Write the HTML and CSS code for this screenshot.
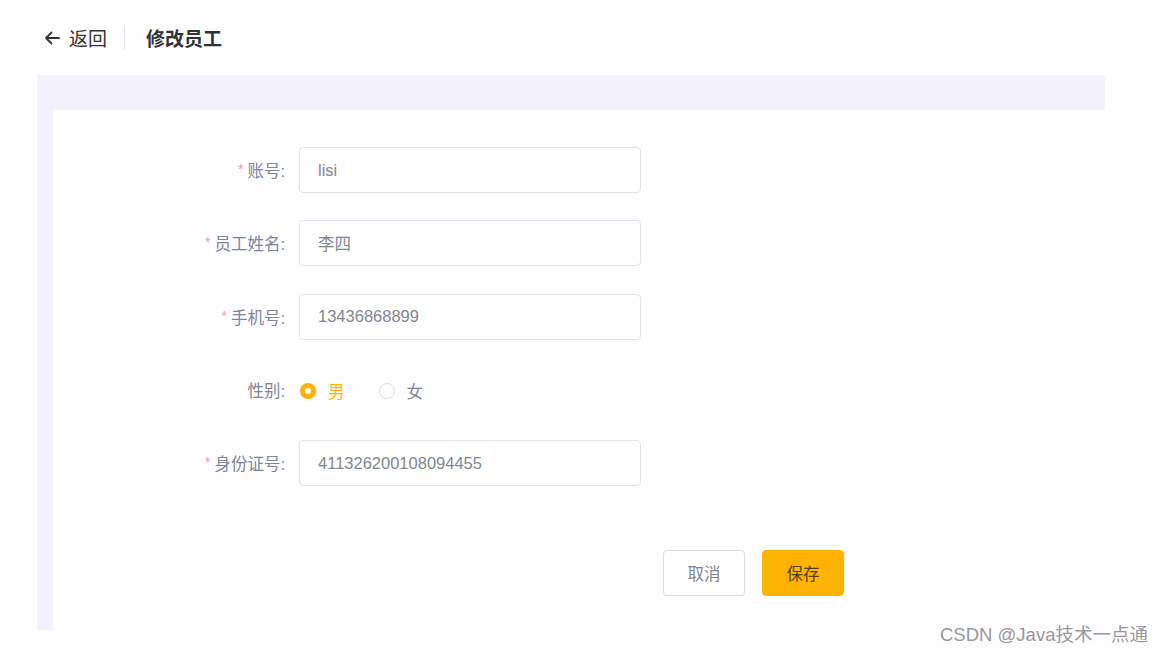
FILE: index.html
```html
<!doctype html>
<html>
<head>
<meta charset="utf-8">
<title>修改员工</title>
<link rel="stylesheet" href="styles.css">
</head>

<body>
<div class="page">
	<div class="header">
		<a class="back">
			<svg width="18" height="18" viewBox="0 0 18 18"><path d="M16 9H3M8.5 3.5L3 9l5.5 5.5" fill="none" stroke="#333" stroke-width="1.8" stroke-linecap="round" stroke-linejoin="round"/></svg>
			<span>返回</span>
		</a>
		<span class="divider"></span>
		<span class="title">修改员工</span>
	</div>
	<div class="main">
		<div class="card">
			<div class="form">
				<label class="label"><i>*</i>账号:</label>
				<div class="input">lisi</div>

				<label class="label"><i>*</i>员工姓名:</label>
				<div class="input">李四</div>

				<label class="label"><i>*</i>手机号:</label>
				<div class="input">13436868899</div>

				<label class="label">性别:</label>
				<div class="radios">
					<span class="radio checked"><b></b>男</span>
					<span class="radio"><b></b>女</span>
				</div>

				<label class="label"><i>*</i>身份证号:</label>
				<div class="input">411326200108094455</div>
			</div>
			<div class="btns">
				<a class="btn">取消</a>
				<a class="btn save">保存</a>
			</div>
		</div>
	</div>
	<div class="mark">CSDN @Java技术一点通</div>
</div>
</body>
</html>
```

FILE: styles.css
```css
	*{
		box-sizing:border-box;
		}
	body{
		margin:0;
		background:#fefdff;
		font-family:"Liberation Sans","Noto Sans CJK SC",sans-serif;
		color:#333;
		}
	.page{
		width:1165px;
		height:651px;
		position:relative;
		overflow:hidden;
		}
	.header{
		height:75px;
		display:flex;
		align-items:center;
		padding:0 0 0 43px;
		}
	.back{
		display:flex;
		align-items:center;
		gap:8px;
		font-size:19px;
		color:#333;
		}
	.divider{
		width:1px;
		height:25px;
		background:#e6e6ea;
		margin:0 21px 0 17px;
		}
	.title{
		font-size:19px;
		font-weight:bold;
		color:#333;
		}
	.main{
		width:1068px;
		height:555px;
		margin-left:37px;
		padding:35px 0 0 16px;
		background:#f3f2fa;
		}
	.card{
		height:520px;
		background:#fefdff;
		padding-top:37px;
		}
	.form{
		display:grid;
		grid-template-columns:234px 342px;
		grid-template-rows:46px 46px 46px 46px 46px;
		column-gap:12px;
		row-gap:27.3px;
		}
	.label{
		height:46px;
		display:flex;
		align-items:center;
		justify-content:flex-end;
		padding-right:2px;
		font-size:16.5px;
		color:#80849a;
		}
	.label i{
		font-style:normal;
		color:#f49a9a;
		font-size:14px;
		margin-right:4px;
		position:relative;
		top:-1px;
		}
	.input{
		height:46px;
		border:1px solid #e3e3ea;
		border-radius:4px;
		background:#fff;
		padding:0 18px;
		display:flex;
		align-items:center;
		font-size:16.5px;
		color:#828691;
		}
	.radios{
		height:46px;
		display:flex;
		align-items:center;
		gap:34px;
		padding:3px 0 0 1px;
		}
	.radio{
		display:flex;
		align-items:center;
		gap:12px;
		font-size:16.5px;
		color:#818592;
		}
	.radio b{
		width:16px;
		height:16px;
		border-radius:50%;
		border:1px solid #e1e1e6;
		background:#fff;
		}
	.radio.checked{
		color:#ffb302;
		}
	.radio.checked b{
		border:5px solid #ffb302;
		}
	.btns{
		display:flex;
		gap:17px;
		padding-left:610px;
		margin-top:64px;
		}
	.btn{
		width:82px;
		height:46px;
		border:1px solid #dcdce3;
		border-radius:4px;
		background:#fff;
		display:flex;
		align-items:center;
		justify-content:center;
		font-size:16.5px;
		color:#818592;
		}
	.btn.save{
		background:#ffb302;
		border-color:#ffb302;
		color:#5a3d10;
		}
	.mark{
		position:absolute;
		left:940px;
		top:620px;
		font-size:18.5px;
		color:#999;
		}
```
